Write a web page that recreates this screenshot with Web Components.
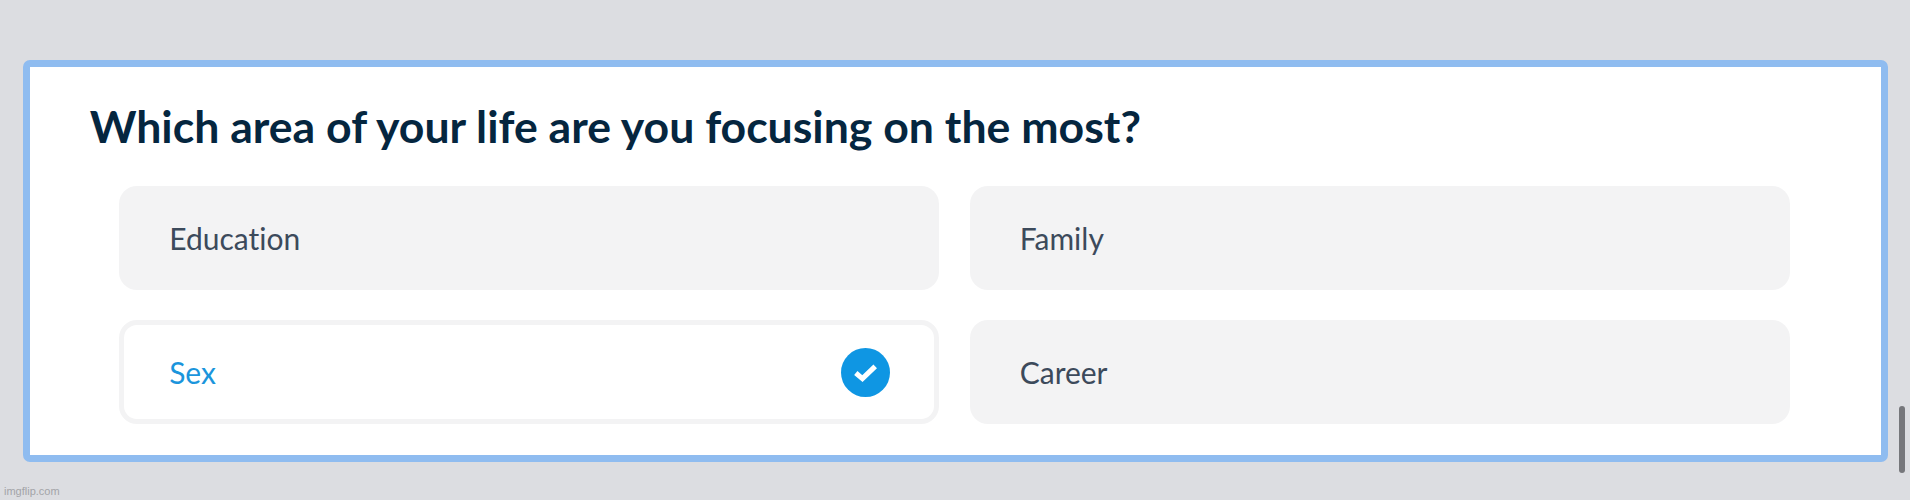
<!DOCTYPE html>
<html>
<head>
<meta charset="utf-8">
<title>Survey question</title>
<style>
  html, body { margin: 0; height: 500px; overflow: hidden; background: #dcdde1; }
  body { font-family: Lato, sans-serif; position: relative; }
</style>
</head>
<body>
<survey-page>
  <question-card heading="Which area of your life are you focusing on the most?">
    <answer-tile>Education</answer-tile>
    <answer-tile>Family</answer-tile>
    <answer-tile selected>Sex</answer-tile>
    <answer-tile>Career</answer-tile>
  </question-card>
</survey-page>

<script>
class SurveyPage extends HTMLElement {
  constructor() {
    super();
    const shadowRoot = this.attachShadow({ mode: "open" });
    shadowRoot.innerHTML = `
<style>
  :host { display: block; box-sizing: border-box; width: 1910px; height: 500px; padding: 60px 22px 0 22.700px; position: relative; }
  .scrollbar { position: absolute; left: 1899px; top: 406px; width: 6px; height: 67px; border-radius: 3px; background: #76777b; }
  .watermark { position: absolute; left: 4px; top: 483px; font: 11px/16px "Liberation Sans", sans-serif; color: #a3a4a8; }
</style>
<slot></slot>
<div class="scrollbar"></div>
<div class="watermark">imgflip.com</div>`;
  }
}

class QuestionCard extends HTMLElement {
  constructor() {
    super();
    const shadowRoot = this.attachShadow({ mode: "open" });
    shadowRoot.innerHTML = `
<style>
  :host { display: block; box-sizing: border-box; width: 1865px; height: 402px; background: #fff; border: 7.300px solid #8fbcf0; border-radius: 7px; padding: 32px 90px 0 60px; font-variant-ligatures: none; }
  h2 { margin: 0; font: 700 44.600px/54px Lato, sans-serif; font-variant-ligatures: none; color: #05263f; }
  .grid { display: grid; grid-template-columns: 820px 820.500px; grid-auto-rows: 104px; gap: 30.500px; margin: 32.700px 0 0 29.500px; }
</style>
<h2></h2>
<div class="grid"><slot></slot></div>`;
  }

  connectedCallback() {
    this.shadowRoot.querySelector("h2").textContent = this.getAttribute("heading") || "";
  }
}

class AnswerTile extends HTMLElement {
  constructor() {
    super();
    const shadowRoot = this.attachShadow({ mode: "open" });
    shadowRoot.innerHTML = `
<style>
  :host { display: flex; align-items: center; justify-content: space-between; box-sizing: border-box; padding: 0 50px 0 50px; background: #f3f3f4; border-radius: 18px; font: 400 30px/36px Lato, sans-serif; font-variant-ligatures: none; color: #3c4a5b; }
  :host([selected]) { background: #fff; border: 5px solid #f3f3f4; padding: 0 44.500px 0 45px; color: #1b95dc; }
  svg { display: none; width: 49px; height: 49px; }
  :host([selected]) svg { display: block; }
</style>
<span><slot></slot></span>
<svg viewBox="0 0 48 48"><circle cx="24" cy="24" r="24" fill="#0f96e3"/><path d="M14.500 24.500l6.500 5.500L33.500 18" fill="none" stroke="#fff" stroke-width="5"/></svg>`;
  }
}

customElements.define("survey-page", SurveyPage);
customElements.define("question-card", QuestionCard);
customElements.define("answer-tile", AnswerTile);
</script>
</body>
</html>
